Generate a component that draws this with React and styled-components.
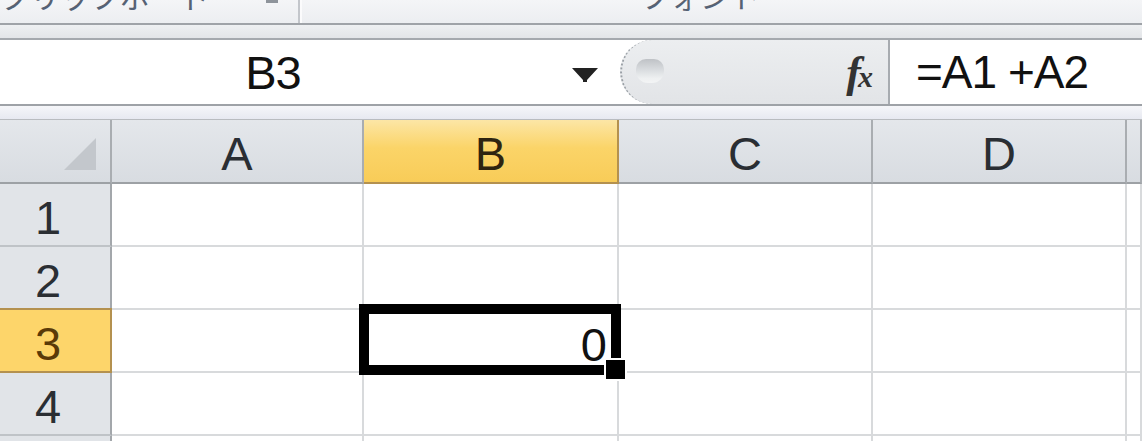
import React from 'react'
import styled, { createGlobalStyle } from 'styled-components'

const GlobalStyle = createGlobalStyle`
  html, body {
    margin: 0;
    padding: 0;
    background: #eceef2;
    overflow: hidden;
  }
  body {
    font-family: "Liberation Sans", Arial, sans-serif;
  }
`

// ribbon remains (labels cut off at the top edge)
const Ribbon = styled.div`
  display: flex;
  height: 23px;
  overflow: hidden;
  background: linear-gradient(#f4f5f7, #eceef1);
  border-bottom: 2px solid #9fa3a8;
`
const RibbonGroup = styled.div`
  position: relative;
  width: ${p => p.$w}px;
  flex: ${p => (p.$w ? 'none' : '1')};
  display: flex;
  justify-content: ${p => p.$align || 'center'};
  border-right: ${p => (p.$sep ? '2px solid #c3c6cb' : 'none')};
  box-shadow: ${p => (p.$sep ? '2px 0 0 #fbfbfc' : 'none')};
`
const GroupLabel = styled.span`
  font-family: "Noto Sans CJK JP", sans-serif;
  font-size: 30px;
  line-height: 30px;
  margin-top: -20px;
  color: #566274;
  white-space: nowrap;
`
const Launcher = styled.span`
  position: absolute;
  right: 20px;
  top: 0;
  width: 12px;
  height: 3px;
  background: #8e949b;
`
const SubStrip = styled.div`
  height: 13px;
  background: linear-gradient(#eef0f2, #e3e5e8);
  border-bottom: 2px solid #a5a9ae;
`

// formula bar
const FormulaBar = styled.div`
  display: flex;
  height: 64px;
  background: #fff;
  border-bottom: 2px solid #9ea2a7;
`
const NameBox = styled.div`
  display: flex;
  align-items: center;
  width: 622px;
  flex: none;
`
const NameText = styled.div`
  width: 546px;
  text-align: center;
  font-size: 47px;
  color: #111;
  letter-spacing: -1px;
`
const DropArrow = styled.svg`
  margin-left: 26px;
  margin-top: 6px;
`
const Splitter = styled.div`
  display: flex;
  align-items: center;
  width: 266px;
  flex: none;
  background: linear-gradient(#eceef0, #e2e4e7);
  border-left: 2px dotted #9aa0a6;
  border-radius: 34px 0 0 34px;
  margin-left: -2px;
`
const Knob = styled.div`
  width: 28px;
  height: 24px;
  margin-left: 14px;
  margin-top: -2px;
  border-radius: 10px 10px 12px 12px;
  background: linear-gradient(#bfc2c6, #d9dcdf 45%, #eef0f1 80%, #f3f4f5);
`
const FxIcon = styled.div`
  margin-left: auto;
  margin-right: 18px;
  font-family: "Liberation Serif", serif;
  font-style: italic;
  font-weight: bold;
  font-size: 44px;
  color: #333;
  letter-spacing: -3px;
  small {
    font-size: 30px;
  }
`
const FormulaInput = styled.div`
  flex: 1;
  display: flex;
  align-items: center;
  padding-left: 26px;
  border-left: 2px solid #a7abb0;
  font-size: 46px;
  color: #111;
  letter-spacing: -1px;
  white-space: nowrap;
`
const Gap = styled.div`
  height: 13px;
  background: linear-gradient(#f5f6f9, #e7e9f1);
  border-bottom: 1px solid #b9bcc0;
`

// worksheet grid
const Sheet = styled.div`
  display: grid;
  grid-template-columns: 112px 252px 255px 254px 254px 1fr;
  grid-template-rows: 64px repeat(5, 63px);
  background: #fff;
`
const headBg = {
  normal: 'linear-gradient(#e4e7eb, #d8dce1)',
  active: 'linear-gradient(#fce6a6, #fbd468 45%, #f8cc58)',
}
const Cell = styled.div`
  position: relative;
  box-sizing: border-box;
  display: flex;
  align-items: center;
  font-size: 47px;
  line-height: 1;
  border-right: 2px solid #d8dadc;
  border-bottom: 2px solid #d8dadc;
  color: #111;
`
const ColHead = styled(Cell)`
  justify-content: center;
  background: ${p => (p.$active ? headBg.active : headBg.normal)};
  border-right-color: ${p => (p.$active ? '#b4914f' : '#a9adb1')};
  border-bottom-color: ${p => (p.$active ? '#b4914f' : '#9da1a5')};
  color: ${p => (p.$active ? '#2e2410' : '#2a2e33')};
  padding-top: 4px;
`
const Corner = styled(Cell)`
  background: linear-gradient(#e4e7eb, #d8dce1);
  border-right-color: #a9adb1;
  border-bottom-color: #9da1a5;
`
const CornerTriangle = styled.div`
  position: absolute;
  left: 64px;
  top: 18px;
  width: 0;
  height: 0;
  border-left: 32px solid transparent;
  border-bottom: 32px solid #c3c7cc;
`
const RowHead = styled(Cell)`
  justify-content: center;
  padding-right: 14px;
  padding-top: 6px;
  background: ${p => (p.$active ? '#fdd56a' : '#e1e4e8')};
  border-right-color: ${p => (p.$active ? '#b4914f' : '#a3a7ab')};
  border-bottom-color: ${p => (p.$active ? '#b4914f' : '#bfc3c7')};
  color: ${p => (p.$active ? '#5a3a08' : '#2a2e33')};
  box-shadow: ${p => (p.$active ? '0 -2px 0 #b4914f' : 'none')};
`
const DataCell = styled(Cell)`
  justify-content: flex-end;
  padding-right: 10px;
  padding-top: 8px;
`
const Selection = styled.div`
  position: absolute;
  z-index: 2;
  top: -6px;
  left: -5px;
  right: -4px;
  bottom: -4px;
  border: 10px solid #000;
  pointer-events: none;
`
const FillHandle = styled.div`
  position: absolute;
  z-index: 3;
  right: -8px;
  bottom: -8px;
  width: 19px;
  height: 19px;
  background: #000;
  box-shadow: 0 0 0 2px #fff;
`

const columns = ['A', 'B', 'C', 'D', '']
// the fifth row is only a sliver at the bottom edge, so its number is not shown
const rows = [1, 2, 3, 4, null]
const activeCol = 'B'
const activeRow = 3

const App = () => (
  <>
    <GlobalStyle />
    <Ribbon>
      <RibbonGroup $w={298} $sep $align="flex-start">
        <GroupLabel>クリップボード</GroupLabel>
        <Launcher />
      </RibbonGroup>
      <RibbonGroup $w={800}>
        <GroupLabel>フォント</GroupLabel>
      </RibbonGroup>
      <RibbonGroup />
    </Ribbon>
    <SubStrip />
    <FormulaBar>
      <NameBox>
        <NameText>B3</NameText>
        <DropArrow width="26" height="14" viewBox="0 0 26 14">
          <polygon points="0,0 26,0 15,12 15,14 11,14 11,12" fill="#222" />
        </DropArrow>
      </NameBox>
      <Splitter>
        <Knob />
        <FxIcon>
          f<small>x</small>
        </FxIcon>
      </Splitter>
      <FormulaInput>=A1 +A2</FormulaInput>
    </FormulaBar>
    <Gap />
    <Sheet>
      <Corner>
        <CornerTriangle />
      </Corner>
      {columns.map((c, i) => (
        <ColHead key={i} $active={c === activeCol}>
          {c}
        </ColHead>
      ))}
      {rows.map((r, ri) => (
        <React.Fragment key={ri}>
          <RowHead $active={r === activeRow}>{r}</RowHead>
          {columns.map((c, i) => {
            const active = c === activeCol && r === activeRow
            return (
              <DataCell key={i}>
                {active && (
                  <>
                    0
                    <Selection />
                    <FillHandle />
                  </>
                )}
              </DataCell>
            )
          })}
        </React.Fragment>
      ))}
    </Sheet>
  </>
)

export default App
